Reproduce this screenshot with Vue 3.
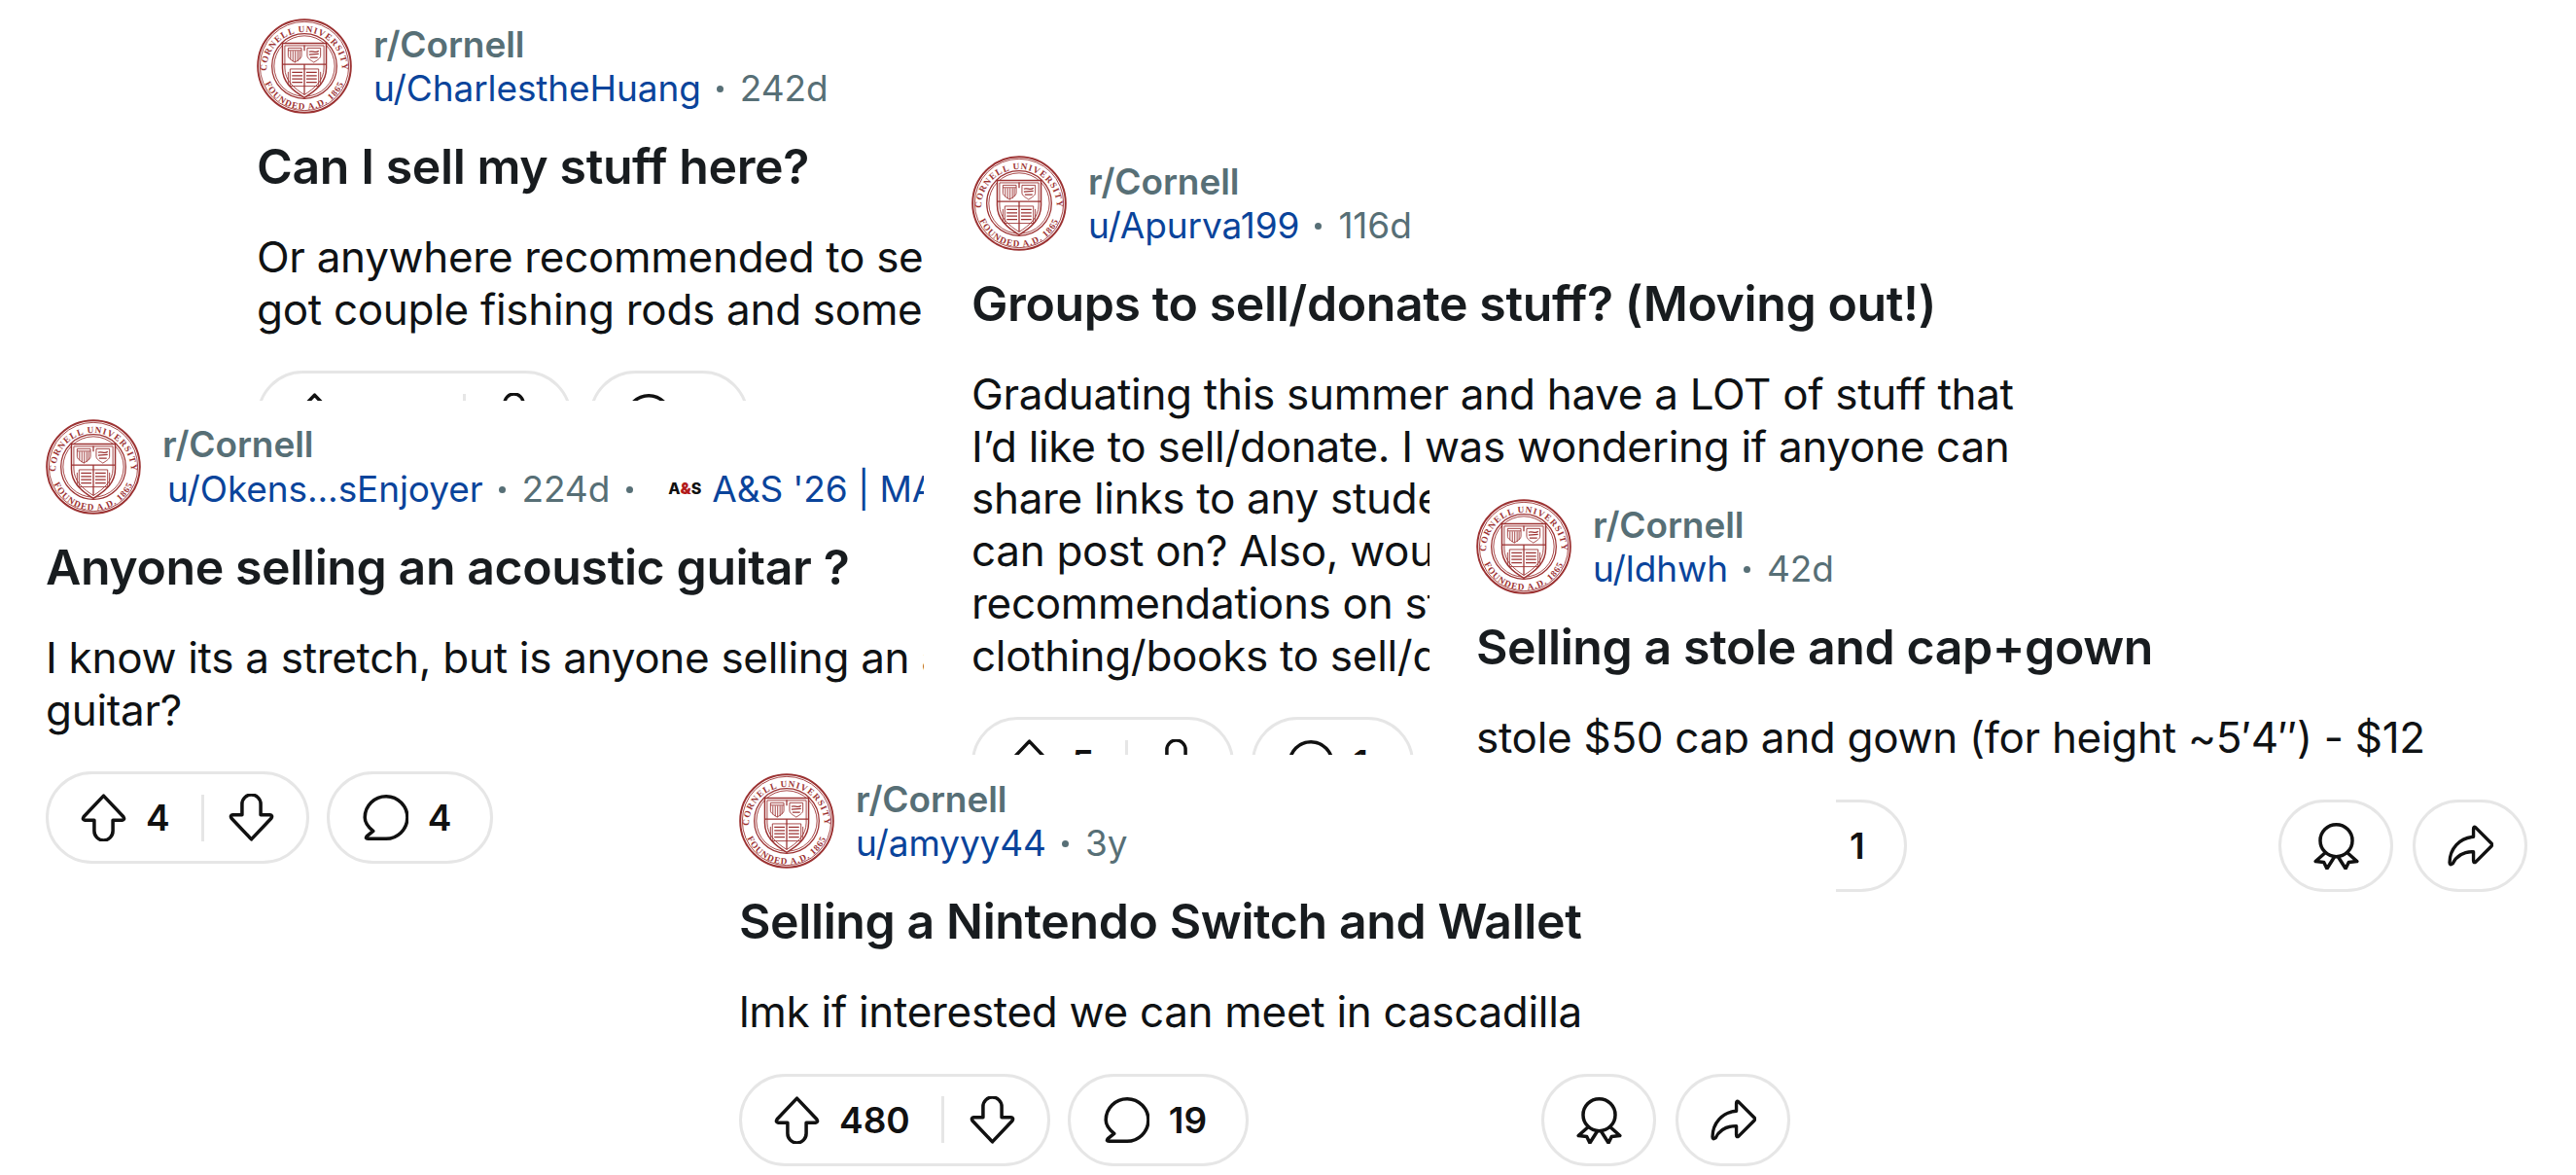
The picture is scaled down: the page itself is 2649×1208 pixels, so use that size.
<script setup>
const cards = [
  { id: 'a', user: 'u/CharlestheHuang', age: '242d', title: 'Can I sell my stuff here?',
    body: ['Or anywhere recommended to sell', 'got couple fishing rods and some'], votes: '', comments: '', cls: 'win-a', tools: false },
  { id: 'b', user: 'u/Apurva199', age: '116d', title: 'Groups to sell/donate stuff? (Moving out!)',
    body: ['Graduating this summer and have a LOT of stuff that', 'I’d like to sell/donate. I was wondering if anyone can', 'share links to any student', 'can post on? Also, would', 'recommendations on stores', 'clothing/books to sell/donate'], votes: '5', comments: '1', cls: 'win-b', tools: false },
  { id: 'c', user: 'u/Okens...sEnjoyer', age: '224d', flair: 'A&S \'26 | MA', title: 'Anyone selling an acoustic guitar ?',
    body: ['I know its a stretch, but is anyone selling an acoustic', 'guitar?'], votes: '4', comments: '4', cls: 'win-c', tools: false },
  { id: 'd', user: 'u/ldhwh', age: '42d', title: 'Selling a stole and cap+gown',
    body: ['stole $50 cap and gown (for height ~5′4″) - $12'], votes: '', comments: '1', cls: 'win-d', tools: true },
  { id: 'e', user: 'u/amyyy44', age: '3y', title: 'Selling a Nintendo Switch and Wallet',
    body: ['lmk if interested we can meet in cascadilla'], votes: '480', comments: '19', cls: 'win-e', tools: true },
]
</script>

<template>
  <main class="canvas">
    <article v-for="c in cards" :key="c.id" class="win" :class="c.cls">
      <header class="head">
        <svg class="seal" viewBox="0 0 100 100" aria-hidden="true">
          <defs>
            <path :id="'top' + c.id" d="M11 60 A39.500 39.500 0 1 1 89 60" />
            <path :id="'bot' + c.id" d="M6 60 A45 45 0 0 0 94 60" />
          </defs>
          <circle cx="50" cy="50" r="48.800" class="ln-thick" />
          <circle cx="50" cy="50" r="46.600" class="ln-thin" />
          <circle cx="50" cy="50" r="34" class="ln-med" />
          <circle cx="50" cy="50" r="31.800" class="ln-thin" />
          <text class="ring"><textPath :href="'#top' + c.id" startOffset="50%" text-anchor="middle">CORNELL UNIVERSITY</textPath></text>
          <text class="ring"><textPath :href="'#bot' + c.id" startOffset="50%" text-anchor="middle">FOUNDED A.D. 1865</textPath></text>
          <path class="ln-fill" d="M27 26 H73 V52 C73 67 62 76 50 83 C38 76 27 67 27 52 Z" />
          <path class="ln-thin" d="M29.500 28.500 H70.500 V52 C70.500 65 60.500 73.500 50 80 C39.500 73.500 29.500 65 29.500 52 Z" />
          <path class="ln-med" d="M27 48 H73 M50 28 V34 M50 48 V80" />
          <path class="ln-thin" d="M33 31 H47 V39 C47 42 43 44 40 46 C37 44 33 42 33 39 Z" />
          <path class="ln-thin" d="M35.500 34 V43 M38 34 V45 M40.500 34 V46 M43 34 V45 M45 34 V43 M33 33.500 H47" />
          <path class="ln-thin" d="M53 31 H67 V39 C67 42 63 44 60 46 C57 44 53 42 53 39 Z" />
          <path class="ln-med" d="M55 35 C58 33 62 37 65 34 M55 38 L65 37 M56 41 L64 41" />
          <path class="ln-thin" d="M35 53 H65 V71 H35 Z M33 56 V70 M67 56 V70" />
          <path class="ln-med" d="M37 56.500 H48 M37 60 H48 M37 63.500 H48 M37 67 H48 M52 56.500 H63 M52 60 H63 M52 63.500 H63 M52 67 H63" />
        </svg>
        <div class="who">
          <div class="sub">r/Cornell</div>
          <div class="meta">
            <span class="user">{{ c.user }}</span>
            <i class="dot"></i>
            <span class="age">{{ c.age }}</span>
            <template v-if="c.flair">
              <i class="dot dot-b"></i>
              <span class="mark">A<b>&amp;</b>S</span>
              <span class="flair">{{ c.flair }}</span>
            </template>
          </div>
        </div>
      </header>

      <h2 class="title">{{ c.title }}</h2>
      <div class="body">
        <div v-for="line in c.body" :key="line" class="line">{{ line }}</div>
      </div>

      <div class="actions">
        <div class="pill vote">
          <svg class="ic" viewBox="0 0 44 46" aria-hidden="true"><path d="M22 2 L41 22 Q43 25 40 25.500 H31 V36 A9 9 0 0 1 13 36 V25.500 H4 Q1 25 3 22 Z" /></svg>
          <span class="count">{{ c.votes }}</span>
          <i class="sep"></i>
          <svg class="ic" viewBox="0 0 44 46" aria-hidden="true"><path d="M22 44 L41 24 Q43 21 40 20.500 H31 V10 A9 9 0 0 0 13 10 V20.500 H4 Q1 21 3 24 Z" /></svg>
        </div>
        <div class="pill reply">
          <svg class="ic" viewBox="0 0 44 46" aria-hidden="true"><path d="M10 36 C5 32 2 28 2 23 A20.500 20.500 0 1 1 22 43.500 H5 Q2 43.500 4 41 Z" /></svg>
          <span class="count">{{ c.comments }}</span>
        </div>
        <template v-if="c.tools">
          <div class="pill round push">
            <svg class="ic" viewBox="0 0 44 46" aria-hidden="true"><circle cx="22" cy="18" r="15.500" /><path d="M11 30 L2 38 L10 39 L13 45 L20 34 M33 30 L42 38 L34 39 L31 45 L24 34" /></svg>
          </div>
          <div class="pill round">
            <svg class="ic" viewBox="0 0 46 42" aria-hidden="true"><path d="M26 4 Q26 1 28.500 3 L44 18.500 Q45.500 20 44 21.500 L28.500 37 Q26 39 26 36 V27 C16 27 9 31 5 39 Q2 41 2 38 C2 24 12 13 26 12 Z" /></svg>
          </div>
        </template>
      </div>
    </article>
  </main>
</template>

<style>
html, body { margin: 0; background: #fff; }
</style>

<style scoped>
.canvas {
  position: relative;
  width: 2649px;
  height: 1208px;
  overflow: hidden;
  background: #fff;
  font-family: Inter, "Liberation Sans", sans-serif;
}
.win {
  position: absolute;
  box-sizing: border-box;
  overflow: hidden;
  background: #fff;
}
.win-a { left: 240px; top: 0; width: 708px; height: 412px; padding: 19px 0 0 24px; z-index: 1; }
.win-b { left: 950px; top: 140px; width: 1200px; height: 660px; padding: 20px 0 0 49px; z-index: 2; }
.win-c { left: 0; top: 412px; width: 950px; height: 500px; padding: 19px 0 0 47px; z-index: 3; }
.win-d { left: 1470px; top: 488px; width: 1179px; height: 460px; padding: 25px 50px 0 48px; z-index: 4; }
.win-e { left: 740px; top: 776px; width: 1148px; height: 432px; padding: 19px 47px 0 20px; z-index: 5; }

.head { display: flex; align-items: flex-start; gap: 22px; height: 98px; }
.seal { flex: none; width: 98px; height: 98px; }
.seal path, .seal circle { fill: none; stroke: #9c3232; }
.seal .ln-fill { fill: #fff; stroke-width: 1.500; }
.ln-thick { stroke-width: 2; }
.ln-med { stroke-width: 1.300; }
.ln-thin { stroke-width: 0.900; }
.seal .ring { fill: #9c3232; stroke: none; font: 700 9.500px "Liberation Serif", serif; letter-spacing: 1px; }

.who { padding-top: 5px; white-space: nowrap; }
.sub { font-size: 37px; line-height: 44px; font-weight: 600; color: #576f76; letter-spacing: -0.100px; }
.meta { display: flex; align-items: center; height: 44px; font-size: 37px; letter-spacing: -0.100px; }
.user { color: #0a449b; }
.age { color: #576f76; }
.flair { color: #0a449b; }
.dot { flex: none; width: 7px; height: 7px; margin: 3px 17px 0 16px; border-radius: 50%; background: #576f76; }
.dot-b { margin-left: 17px; margin-right: 0; }
.win-c .who { padding-top: 4px; }
.win-c .meta { margin-left: 5px; height: 46px; }
.mark { margin-left: 36px; margin-right: 11px; font-size: 16px; font-weight: 800; color: #111; letter-spacing: 0; }
.mark b { color: #b31b1b; }

.title {
  margin: 27px 0 0;
  font-size: 50px;
  line-height: 54px;
  font-weight: 600;
  color: #181c1f;
  letter-spacing: -0.400px;
  white-space: nowrap;
}
.body { margin-top: 40px; font-size: 44px; line-height: 53.700px; color: #0f1214; letter-spacing: -0.300px; }
.line { white-space: nowrap; }

.actions { display: flex; gap: 18px; margin-top: 36px; }
.pill {
  box-sizing: border-box;
  flex: none;
  display: flex;
  align-items: center;
  height: 95px;
  border: 3px solid #e6e6e6;
  border-radius: 48px;
  background: #fff;
}
.vote { padding: 0 33px; }
.reply { padding: 0 40px 0 34px; }
.round { width: 118px; justify-content: center; padding: 0; }
.push { margin-left: auto; margin-right: 2px; }
.ic { flex: none; width: 47px; height: 49px; fill: none; stroke: #111; stroke-width: 3.300; stroke-linejoin: round; stroke-linecap: round; }
.count { margin-left: 20px; font-size: 37px; font-weight: 600; color: #111; }
.sep { flex: none; width: 3px; height: 48px; margin: 0 26px 0 32px; background: #e6e6e6; }
.win-a .vote .count { min-width: 77px; }
.win-a .reply .count { min-width: 17px; }
.win-b .reply .count { min-width: 20px; }
.win-c .sep { margin-right: 25px; }
.win-d .vote .count { min-width: 15px; }
</style>
